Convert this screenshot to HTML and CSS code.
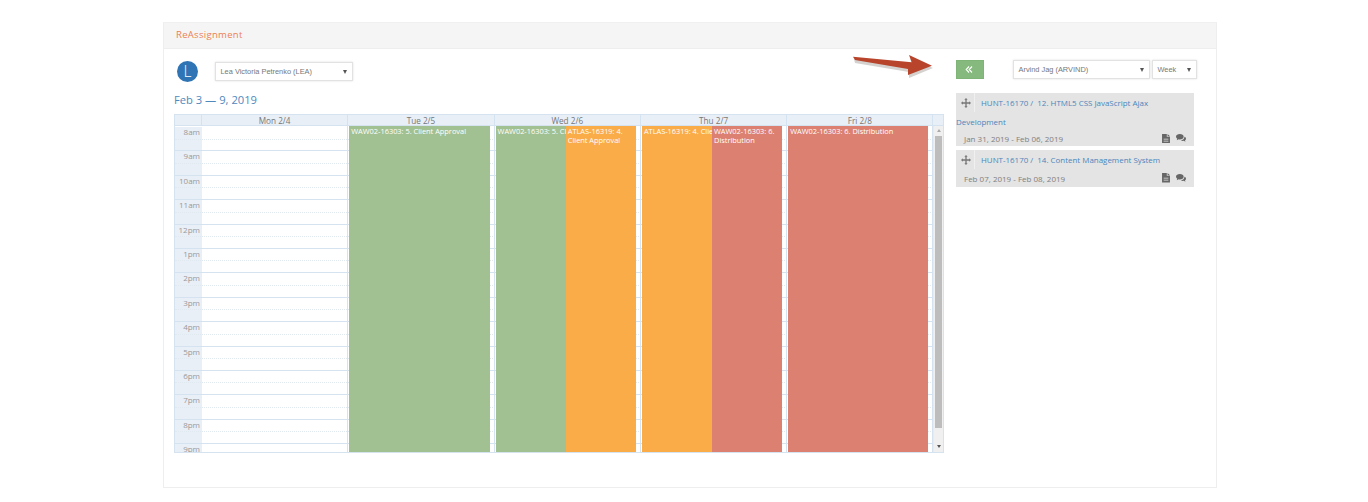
FILE: index.html
```html
<!DOCTYPE html>
<html lang="en">
<head>
<meta charset="utf-8">
<title>ReAssignment</title>
<link rel="stylesheet" href="styles.css">
</head>
<body>
<section class="panel">
  <header class="panel-head">ReAssignment</header>
  <div class="panel-body">
    <div class="left">
      <div class="user-row">
        <span class="avatar">L</span>
        <div class="select select-user">Lea Victoria Petrenko (LEA)</div>
      </div>
      <h2 class="range">Feb 3 — 9, 2019</h2>
      <div class="cal">
        <div class="cal-head">
          <div class="corner"></div>
          <div class="day">Mon 2/4</div>
          <div class="day">Tue 2/5</div>
          <div class="day">Wed 2/6</div>
          <div class="day">Thu 2/7</div>
          <div class="day">Fri 2/8</div>
          <div class="corner-r"></div>
        </div>
        <div class="cal-body">
          <div class="slots">
            <div class="hour"><span class="time">8am</span></div>
            <div class="hour"><span class="time">9am</span></div>
            <div class="hour"><span class="time">10am</span></div>
            <div class="hour"><span class="time">11am</span></div>
            <div class="hour"><span class="time">12pm</span></div>
            <div class="hour"><span class="time">1pm</span></div>
            <div class="hour"><span class="time">2pm</span></div>
            <div class="hour"><span class="time">3pm</span></div>
            <div class="hour"><span class="time">4pm</span></div>
            <div class="hour"><span class="time">5pm</span></div>
            <div class="hour"><span class="time">6pm</span></div>
            <div class="hour"><span class="time">7pm</span></div>
            <div class="hour"><span class="time">8pm</span></div>
            <div class="hour"><span class="time">9pm</span></div>
          </div>
          <div class="events">
            <div class="ecol"></div>
            <div class="ecol"><div class="ev green">WAW02-16303: 5. Client Approval</div></div>
            <div class="ecol"><div class="ev green">WAW02-16303: 5. Client Approval</div><div class="ev orange">ATLAS-16319: 4. Client Approval</div></div>
            <div class="ecol"><div class="ev orange">ATLAS-16319: 4. Client Approval</div><div class="ev red">WAW02-16303: 6. Distribution</div></div>
            <div class="ecol"><div class="ev red">WAW02-16303: 6. Distribution</div></div>
          </div>
          <div class="scrollbar">
            <span class="sb-up"></span>
            <span class="sb-thumb"></span>
            <span class="sb-down"></span>
          </div>
        </div>
      </div>
    </div>
    <div class="right">
      <div class="controls">
        <button class="btn-green" type="button" aria-label="Collapse">
          <svg class="i-back" width="8" height="7" viewBox="0 0 8 7"><path d="M4 .5 1.200 3.500 4 6.500M7 .5 4.200 3.500 7 6.500" fill="none" stroke="#fff" stroke-width="1.100"/></svg>
        </button>
        <div class="select select-res">Arvind Jag (ARVIND)</div>
        <div class="select select-week">Week</div>
      </div>
      <div class="card">
        <div class="card-title">
          <span class="move"><svg class="i-move" viewBox="0 0 12 12"><path fill="#777" d="M6 0 8 2.2H6.8V5.2H9.8V4L12 6 9.8 8V6.8H6.8V9.8H8L6 12 4 9.8H5.2V6.8H2.2V8L0 6 2.2 4V5.2H5.2V2.2H4Z"/></svg></span>
          <a class="link first">HUNT-16170 /&nbsp; 12. HTML5 CSS JavaScript Ajax</a>
        </div>
        <a class="link wrap">Development</a>
        <div class="card-foot">
          <span class="date">Jan 31, 2019 - Feb 06, 2019</span>
          <svg class="i-doc" viewBox="0 0 10 12"><path fill="#666" d="M0 0H6V3.5H10V12H0ZM7 0 10 2.7H7ZM2 6V7H8V6ZM2 8.5V9.5H8V8.5Z" fill-rule="evenodd"/></svg>
          <svg class="i-chat" viewBox="0 0 13 11"><path fill="#666" d="M5 0C7.8 0 10 1.5 10 3.5S7.8 7 5 7C4.5 7 4 7 3.5 6.800L1 8 1.600 6C.6 5.400 0 4.500 0 3.500 0 1.500 2.200 0 5 0ZM11 3.500C12.200 4 13 5 13 6 13 6.900 12.500 7.600 11.700 8.100L12.300 10 10 8.900C8.700 9.200 7.300 8.900 6.300 8 8.900 7.900 11.100 6 11 3.500Z"/></svg>
        </div>
      </div>
      <div class="card">
        <div class="card-title">
          <span class="move"><svg class="i-move" viewBox="0 0 12 12"><path fill="#777" d="M6 0 8 2.2H6.8V5.2H9.8V4L12 6 9.8 8V6.8H6.8V9.8H8L6 12 4 9.8H5.2V6.8H2.2V8L0 6 2.2 4V5.2H5.2V2.2H4Z"/></svg></span>
          <a class="link first">HUNT-16170 /&nbsp; 14. Content Management System</a>
        </div>
        <div class="card-foot">
          <span class="date">Feb 07, 2019 - Feb 08, 2019</span>
          <svg class="i-doc" viewBox="0 0 10 12"><path fill="#666" d="M0 0H6V3.5H10V12H0ZM7 0 10 2.7H7ZM2 6V7H8V6ZM2 8.5V9.5H8V8.5Z" fill-rule="evenodd"/></svg>
          <svg class="i-chat" viewBox="0 0 13 11"><path fill="#666" d="M5 0C7.8 0 10 1.5 10 3.5S7.8 7 5 7C4.5 7 4 7 3.5 6.800L1 8 1.600 6C.6 5.400 0 4.500 0 3.500 0 1.500 2.200 0 5 0ZM11 3.500C12.200 4 13 5 13 6 13 6.900 12.500 7.600 11.700 8.100L12.300 10 10 8.900C8.700 9.200 7.300 8.900 6.300 8 8.900 7.900 11.100 6 11 3.500Z"/></svg>
        </div>
      </div>
      <svg class="arrow" width="84" height="27" viewBox="0 0 84 27">
        <path fill="#a9a49e" opacity=".5" d="M1 6 59 12 57 5 80 15 56 25 56 19 2 10Z"/>
        <path fill="#b8442b" d="M0 3.700 58.700 9.300 56 2 79 12.700 55 22 55 16 2 7Z"/>
      </svg>
    </div>
  </div>
</section>
</body>
</html>
```

FILE: styles.css
```css
* { box-sizing: border-box; }
html, body { margin: 0; background: #fff; }
body {
  height: 502px;
  overflow: hidden;
  padding: 22px 151px 0 163px;
  font-family: "Open Sans", sans-serif;
}
.panel {
  height: 466px;
  border: 1px solid #eee;
  border-top-color: #f0f0f0;
  display: flex;
  flex-direction: column;
}
.panel-head {
  height: 26px;
  background: #f5f5f5;
  border-bottom: 1px solid #eee;
  color: #ee7f50;
  font-size: 9.500px;
  line-height: 24px;
  padding-left: 12px;
  letter-spacing: .3px;
}
.panel-body {
  flex: 1;
  display: flex;
  padding: 12px 0 0 10px;
  position: relative;
}
.left { width: 770px; }
.right { width: 241px; margin: -1px 0 0 12px; }
.user-row { display: flex; align-items: center; height: 20px; }
.avatar {
  width: 21px;
  height: 21px;
  border-radius: 50%;
  background: #2f74b5;
  color: #fff;
  font-size: 15.500px;
  font-weight: 300;
  line-height: 21px;
  text-align: center;
  margin: 0 17px 0 3px;
}
.select {
  position: relative;
  height: 19px;
  background: #fff;
  border: 1px solid #e2e2e2;
  box-shadow: 0 0 2px rgba(0,0,0,.12);
  font-family: "Liberation Sans", sans-serif;
  font-size: 7.400px;
  line-height: 17px;
  color: #777;
  padding-left: 4.500px;
}
.select::after {
  content: "";
  position: absolute;
  right: 5px;
  top: 7px;
  border-left: 2px solid transparent;
  border-right: 2px solid transparent;
  border-top: 4px solid #555;
}
.select-user { width: 138px; }
.select-res { width: 137px; margin-left: 29px; }
.select-week { width: 45px; margin-left: 2px; }
.range {
  margin: 10px 0 0;
  height: 23px;
  font-size: 11.200px;
  line-height: 17px;
  font-weight: 400;
  color: #5089be;
}
.cal {
  height: 339px;
  border: 1px solid #d5e3f0;
  display: flex;
  flex-direction: column;
  font-size: 8px;
  overflow: hidden;
}
.cal-head {
  display: flex;
  height: 10px;
  flex: none;
  background: #e9eff7;
  color: #777;
  line-height: 11px;
  text-align: center;
  font-size: 8.200px;
}
.corner { width: 27px; flex: none; border-right: 1px solid #d5e3f0; }
.day { width: 146.300px; flex: none; border-right: 1px solid #d5e3f0; }
.corner-r { flex: 1; }
.cal-body {
  flex: 1;
  position: relative;
  overflow: hidden;
  border-top: 1px solid #d5e3f0;
}
.slots { padding-top: 1px; }
.hour {
  height: 24.400px;
  border-bottom: 1px solid #d5e3f0;
  position: relative;
  background: linear-gradient(to right, #e9eff7 27px, #fff 27px);
}
.hour::after {
  content: "";
  position: absolute;
  left: 0;
  right: 0;
  top: 11.500px;
  border-top: 1px dotted #e0e8f0;
}
.time {
  display: block;
  width: 25px;
  text-align: right;
  color: #999;
  font-size: 8px;
  line-height: 9.500px;
}
.events {
  position: absolute;
  top: 0;
  bottom: 0;
  left: 27px;
  width: 732px;
  display: flex;
}
.ecol {
  width: 146.300px;
  flex: none;
  display: flex;
  padding: 0 4px 0 1px;
  border-right: 1px solid #d5e3f0;
}
.ev {
  flex: 1 1 0;
  min-width: 0;
  overflow: hidden;
  color: #fff;
  font-size: 7.400px;
  line-height: 9px;
  padding: 1px 2px;
}
.green { background: #a2c192; white-space: nowrap; }
.orange { background: #faac49; }
.red { background: #dc8172; }
.ecol .orange:first-child { white-space: nowrap; }
.scrollbar {
  position: absolute;
  top: 0;
  right: 0;
  bottom: 0;
  width: 10px;
  background: #f0f0f0;
  border-left: 1px solid #e4ebf2;
  display: flex;
  flex-direction: column;
  align-items: center;
}
.sb-up, .sb-down {
  width: 0;
  height: 0;
  flex: none;
  border-left: 2.500px solid transparent;
  border-right: 2.500px solid transparent;
}
.sb-up { margin-top: 3px; border-bottom: 3px solid #aaa; }
.sb-thumb { width: 7px; height: 292px; margin-top: 4px; background: #bdbdbd; }
.sb-down { margin-top: 17px; border-top: 3px solid #555; }
.controls { display: flex; height: 19px; }
.btn-green {
  width: 28px;
  height: 19px;
  padding: 0 3px 1px 0;
  border: 1px solid #7fb477;
  background: #85b97d;
  display: flex;
  align-items: center;
  justify-content: center;
}
.card {
  width: 238px;
  background: #e4e4e4;
  margin-top: 4px;
  font-size: 8px;
  color: #777;
}
.controls + .card { margin-top: 14px; }
.card:first-of-type { height: 53.500px; }
.card:last-of-type { height: 36.500px; }
.card-title { display: flex; height: 19px; align-items: center; }
.move {
  width: 19px;
  height: 19px;
  flex: none;
  display: flex;
  align-items: center;
  justify-content: center;
  border-right: 1px solid #f0f0f0;
}
.i-move { width: 10px; height: 10px; margin-left: 1px; }
.link { color: #4a86bd; font-size: 7.950px; white-space: nowrap; }
.first { margin-left: 6px; }
.wrap { display: block; height: 19px; line-height: 21px; }
.card-foot {
  display: flex;
  align-items: center;
  height: 15px;
  padding: 0 8px;
}
.card:last-of-type .card-foot { height: 18px; }
.date { flex: 1; font-size: 8px; color: #808080; }
.i-doc { width: 8px; height: 9.500px; margin-right: 6px; }
.i-chat { width: 10px; height: 8.500px; }
.arrow {
  position: absolute;
  left: 689px;
  top: 4px;
}
```
